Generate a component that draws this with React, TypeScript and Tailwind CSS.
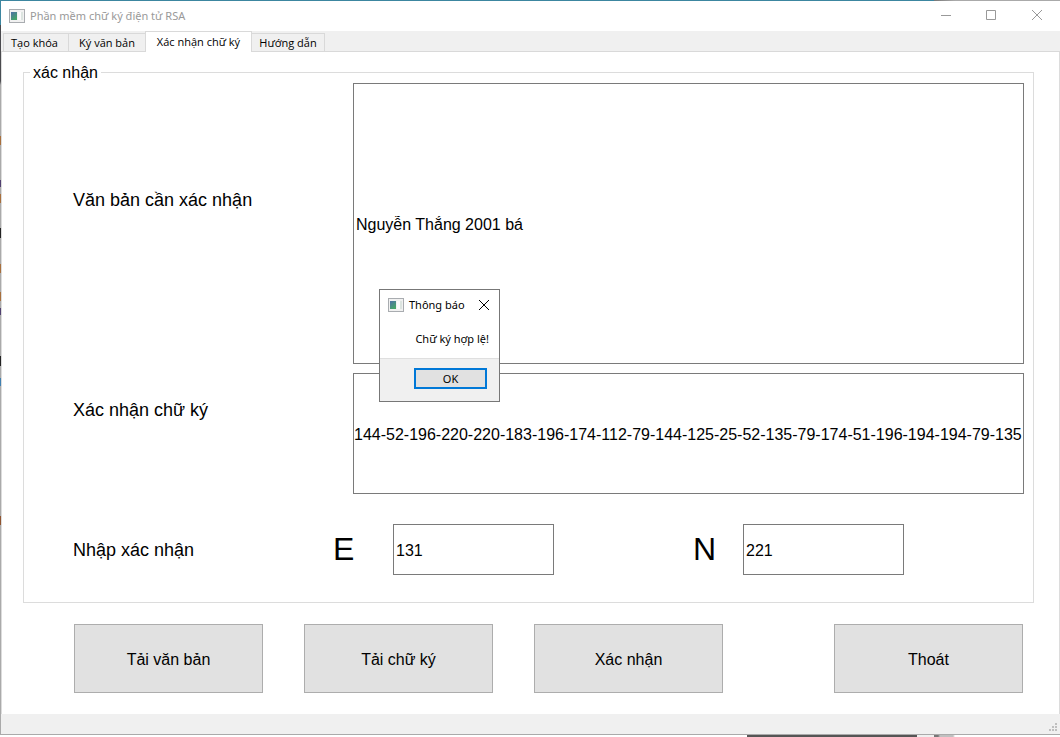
import React from 'react';

const tabFont = "font-['Open_Sans','Noto_Sans',sans-serif]";
const uiFont = "font-['Noto_Sans','Open_Sans',sans-serif]";

function AppIcon({ id }: { id: string }) {
  return (
    <svg width="16" height="14" viewBox="0 0 16 14" aria-hidden="true" shapeRendering="crispEdges">
      <defs>
        <linearGradient id={id} x1="0" y1="0" x2="0.6" y2="1">
          <stop offset="0" stopColor="#4f6fa8" />
          <stop offset="1" stopColor="#45a567" />
        </linearGradient>
      </defs>
      <rect x="0.5" y="0.5" width="15" height="13" fill="#f1f1f1" stroke="#a9acb0" />
      <rect x="2" y="3" width="6" height="8" fill={`url(#${id})`} />
      <rect x="9" y="3" width="3" height="8" fill="#fafafa" />
      <rect x="12" y="3" width="2" height="8" fill="#dce4e0" />
    </svg>
  );
}

function CloseIcon() {
  return (
    <svg width="12" height="12" viewBox="0 0 12 12" fill="none" stroke="currentColor" aria-hidden="true">
      <path d="M1 1l10 10M11 1L1 11" />
    </svg>
  );
}

function TitleBar() {
  return (
    <header className="flex h-[30px] items-center bg-white pl-2 text-[#999999]">
      <AppIcon id="window-pane" />
      <h1 className={`${uiFont} ml-[5px] flex-1 text-[11px] leading-4`}>Phần mềm chữ ký điện tử RSA</h1>
      <button type="button" aria-label="Thu nhỏ" className="flex h-full w-[45px] items-center justify-center">
        <svg width="10" height="10" aria-hidden="true"><path d="M0 4.5h10" stroke="currentColor" /></svg>
      </button>
      <button type="button" aria-label="Phóng to" className="flex h-full w-[46px] items-center justify-center pb-[2px]">
        <svg width="10" height="10" aria-hidden="true"><path d="M.5.5h9v9h-9z" fill="none" stroke="currentColor" /></svg>
      </button>
      <button type="button" aria-label="Đóng" className="flex h-full w-[46px] items-center justify-center pb-[2px]">
        <CloseIcon />
      </button>
    </header>
  );
}

const tabBase = 'shrink-0 whitespace-nowrap border-[#d9d9d9] text-center text-[11px] leading-4';

function Tabs() {
  return (
    <div role="tablist" className={`${tabFont} flex h-[21px] items-end bg-[#f0f0f0] pl-[2px] shadow-[inset_0_-1px_0_#d9d9d9]`}>
      <button type="button" role="tab" className={`${tabBase} h-[19px] w-[66px] border pr-[3px]`}>Tạo khóa</button>
      <button type="button" role="tab" className={`${tabBase} h-[19px] w-[76px] border-y`}>Ký văn bản</button>
      <button type="button" role="tab" aria-selected="true" className={`${tabBase} h-[21px] w-[107px] border-x border-t bg-white`}>
        Xác nhận chữ ký
      </button>
      <button type="button" role="tab" className={`${tabBase} h-[19px] w-[73px] border border-l-0`}>Hướng dẫn</button>
    </div>
  );
}

function ActionButton({ children }: { children: React.ReactNode }) {
  return (
    <button type="button" className="h-[69px] w-[189px] border border-[#adadad] bg-[#e1e1e1] pt-[2px] text-[16px] leading-5">
      {children}
    </button>
  );
}

function MessageBox() {
  return (
    <div
      role="dialog"
      aria-labelledby="msg-title"
      className={`${uiFont} absolute left-[379px] top-[289px] w-[121px] border border-[#777777] bg-white text-[11px] leading-4`}
    >
      <div className="flex h-[29px] items-center pl-2">
        <AppIcon id="dialog-pane" />
        <h2 id="msg-title" className="ml-[5px] flex-1 whitespace-nowrap">Thông báo</h2>
        <button type="button" aria-label="Đóng" className="mr-[9px]">
          <CloseIcon />
        </button>
      </div>
      <p className="h-[39px] whitespace-nowrap pr-[10px] pt-3 text-right">Chữ ký hợp lệ!</p>
      <div className="flex h-[43px] justify-end border-t border-[#dfdfdf] bg-[#f0f0f0] pr-3 pt-[9px]">
        <button type="button" className="h-[21px] w-[73px] border-2 border-[#0078d7] bg-[#e1e1e1]">
          OK
        </button>
      </div>
    </div>
  );
}

const field = 'border border-[#7a7a7a] bg-white pt-[2px] text-[16px] leading-5 outline-none';
const rowLabel = 'text-[18px] leading-6';
const keyLabel = 'pb-[2px] text-[32px] leading-10';

export default function App() {
  return (
    <div className="relative flex min-h-screen flex-col bg-white font-['Liberation_Sans',Arial,sans-serif] text-black">
      <div className="h-px bg-[linear-gradient(to_right,#3c86a0_0,#3c86a0_934px,#777_934px,#aaaaaa_955px)]" />
      <div className="flex flex-1">
        <div className="w-px bg-[linear-gradient(#3c86a0_24px,#4a4a4e_24px,#4a4a4e_80px,#aaa_84px,#aaa_135px,#a86f3c_135px,#a86f3c_144px,#aaa_144px,#aaa_179px,#504070_179px,#504070_186px,#aaa_186px,#aaa_193px,#a86f3c_193px,#a86f3c_202px,#aaa_202px,#aaa_227px,#222_227px,#222_237px,#aaa_237px,#aaa_263px,#a86f3c_263px,#a86f3c_272px,#aaa_272px,#aaa_291px,#a86f3c_291px,#a86f3c_300px,#aaa_300px,#aaa_307px,#504070_307px,#504070_314px,#aaa_314px,#aaa_355px,#222_355px,#222_365px,#aaa_365px,#aaa_377px,#4080b0_377px,#4080b0_385px,#aaa_385px,#aaa_515px,#8f532f_515px,#8f532f_524px,#aaa_524px)]" />
        <div className="flex min-w-0 flex-1 flex-col border-b border-[#aaaaaa]">
          <TitleBar />
          <Tabs />
          <main className="flex-1 border-x border-[#dcdcdc] pl-[21px] pr-[25px] pt-[10px]">
            <fieldset className="min-w-0 border border-[#dcdcdc] pb-[27px] pl-[49px] pr-[9px]">
              <legend className="-ml-[43px] h-5 px-[3px] text-[16px] leading-[22px]">xác nhận</legend>
              <div className="grid grid-cols-[280px_1fr] gap-y-[9px] pt-px">
                <label htmlFor="document" className={`${rowLabel} self-center pb-12`}>Văn bản cần xác nhận</label>
                <input id="document" defaultValue="Nguyễn Thắng 2001 bá" className={`${field} h-[281px] w-full min-w-0 px-[2px]`} />
                <label htmlFor="signature" className={`${rowLabel} self-center pb-12`}>Xác nhận chữ ký</label>
                <input
                  id="signature"
                  defaultValue="144-52-196-220-220-183-196-174-112-79-144-125-25-52-135-79-174-51-196-194-194-79-135"
                  className={`${field} h-[121px] w-full min-w-0`}
                />
              </div>
              <div className="mt-[30px] grid grid-cols-[260px_60px_300px_50px_1fr] items-center">
                <span className={rowLabel}>Nhập xác nhận</span>
                <label htmlFor="key-e" className={keyLabel}>E</label>
                <input id="key-e" defaultValue="131" className={`${field} h-[51px] w-[161px] px-[2px]`} />
                <label htmlFor="key-n" className={keyLabel}>N</label>
                <input id="key-n" defaultValue="221" className={`${field} h-[51px] w-[161px] px-[2px]`} />
              </div>
            </fieldset>
            <div className="flex gap-[41px] pb-[21px] pl-[51px] pr-[11px] pt-[21px]">
              <ActionButton>Tải văn bản</ActionButton>
              <ActionButton>Tải chữ ký</ActionButton>
              <ActionButton>Xác nhận</ActionButton>
              <div className="ml-auto">
                <ActionButton>Thoát</ActionButton>
              </div>
            </div>
          </main>
          <footer className="flex h-5 items-end justify-end bg-[#f0f0f0] pb-[2px] pr-[2px]">
            <svg width="9" height="9" fill="#bfbfbf" aria-hidden="true" shapeRendering="crispEdges">
              <path d="M6 0h2v2H6zM3 3h2v2H3zM6 3h2v2H6zM0 6h2v2H0zM3 6h2v2H3zM6 6h2v2H6z" />
            </svg>
          </footer>
        </div>
      </div>
      <div className="h-[2px] bg-[linear-gradient(to_right,#fff_747px,#555_747px,#555_917px,#f0f0f0_917px,#f0f0f0_934px,#777_934px,#777_938px,#c0c0c0_940px,#c0c0c0_953px,#fff_955px)]" />
      <MessageBox />
    </div>
  );
}
